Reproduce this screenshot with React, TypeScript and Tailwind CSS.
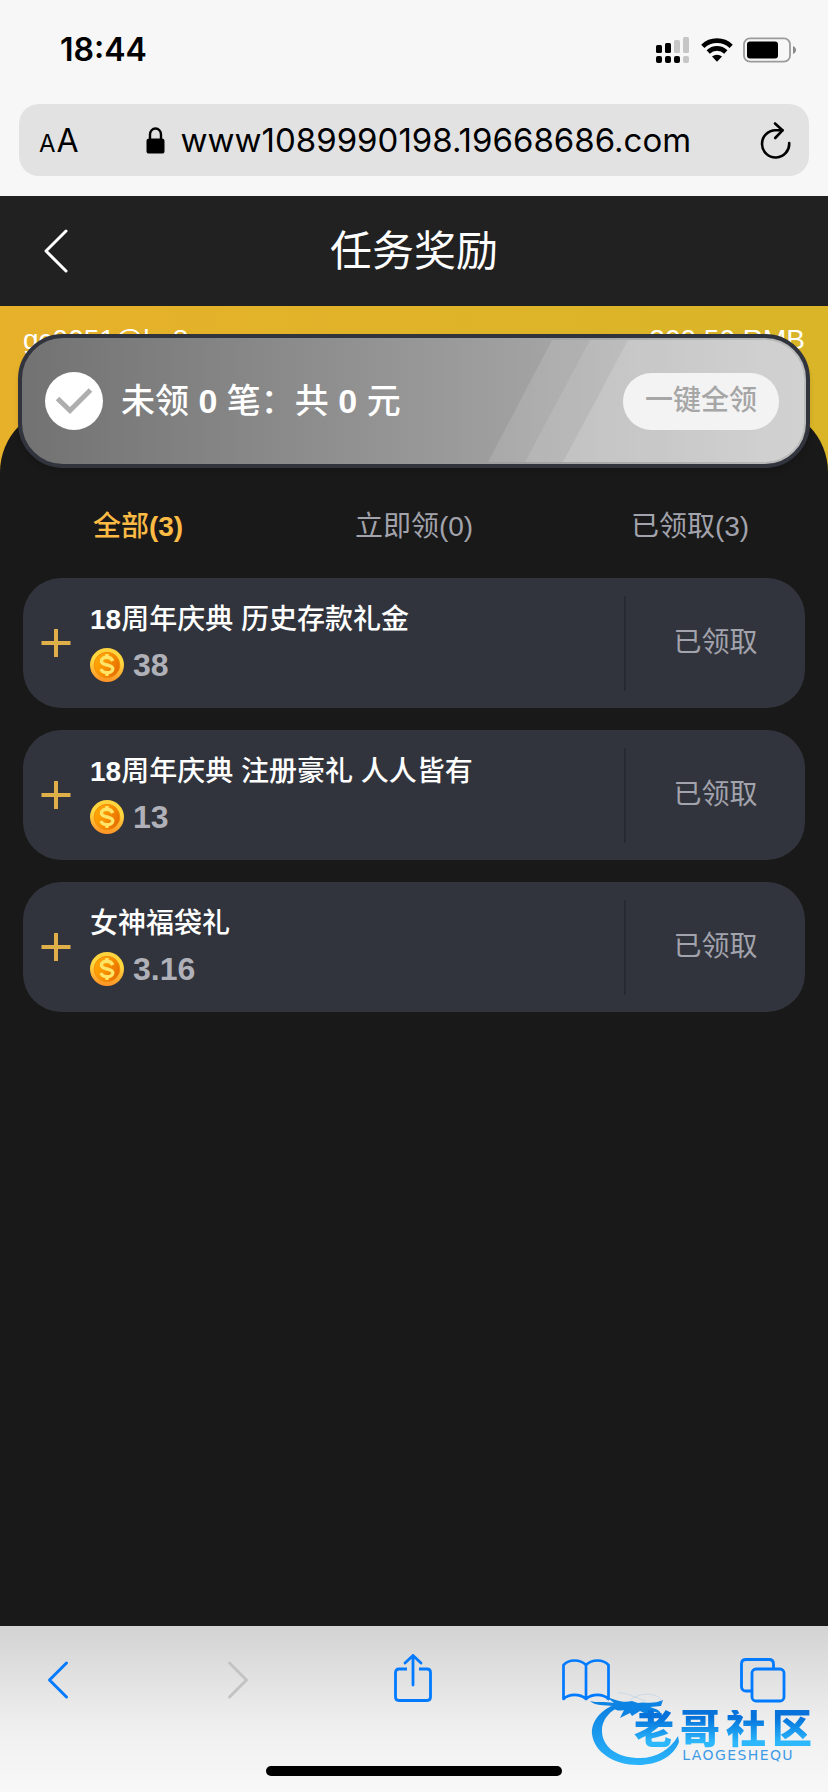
import React from "react";

const rewards = [
  { title: "18周年庆典 历史存款礼金", amount: "38" },
  { title: "18周年庆典 注册豪礼 人人皆有", amount: "13" },
  { title: "女神福袋礼", amount: "3.16" },
];

const tabs = [
  { name: "全部", count: 3, active: true },
  { name: "立即领", count: 0, active: false },
  { name: "已领取", count: 3, active: false },
];

function StatusBar() {
  return (
    <div className="flex h-[104px] items-center justify-between pr-[32px] pb-[4px] pl-[60px]">
      <span className="text-[32px] leading-10 font-semibold">18:44</span>
      <div className="flex items-center gap-[12px]">
        <svg className="h-[26px] w-[33px]" viewBox="0 0 33 26" aria-hidden="true">
          <g fill="#000">
            <rect x="0" y="8" width="6" height="8" rx="1.5" />
            <rect x="9" y="6" width="6" height="10" rx="1.5" />
            <rect x="0" y="19" width="6" height="7" rx="2" />
            <rect x="9" y="19" width="6" height="7" rx="2" />
            <rect x="18" y="19" width="6" height="7" rx="2" />
          </g>
          <g fill="#c6c6c6">
            <rect x="18" y="3" width="6" height="13" rx="1.5" />
            <rect x="27" y="0" width="6" height="16" rx="1.5" />
            <rect x="27" y="19" width="6" height="7" rx="2" />
          </g>
        </svg>
        <svg className="h-[26px] w-[32px]" viewBox="0 0 32 26" aria-hidden="true">
          <g fill="none" stroke="#000" strokeWidth="4.6">
            <path d="M1.8 9.3 A20.5 20.5 0 0 1 30.2 9.3" />
            <path d="M7.2 15 A12.6 12.6 0 0 1 24.8 15" />
          </g>
          <path d="M11 19.6 A7.4 7.4 0 0 1 21 19.6 L16 24.8 Z" fill="#000" />
        </svg>
        <svg className="-ml-[2px] h-[26px] w-[53px]" viewBox="0 0 53 26" aria-hidden="true">
          <rect x="1" y="1.3" width="46" height="23.4" rx="6" fill="none" stroke="#9b9b9b" strokeWidth="1.8" />
          <rect x="4" y="4.5" width="31" height="17" rx="3" fill="#000" />
          <path d="M50 9 C54 10.500 54 15.500 50 17 Z" fill="#8a8a8a" />
        </svg>
      </div>
    </div>
  );
}

function AddressBar() {
  return (
    <div className="mx-[19px] flex h-[72px] items-center justify-between rounded-[20px] bg-[#e2e2e2] pr-[18px] pl-[20px]">
      <button type="button" aria-label="文字大小" className="flex items-baseline gap-[1px] pt-[4px]">
        <span className="text-[24px] leading-10">A</span>
        <span className="text-[32px] leading-10">A</span>
      </button>
      <div className="flex items-center gap-[16px]">
        <svg className="h-[27px] w-[19px]" viewBox="0 0 19 27" aria-hidden="true">
          <path d="M4 13 V7.500 A5.500 6 0 0 1 15 7.500 V13" fill="none" stroke="#000" strokeWidth="2.400" />
          <rect x="0.500" y="11.500" width="18" height="15" rx="2.600" fill="#000" />
        </svg>
        <span className="text-[33px] leading-10">www1089990198.19668686.com</span>
      </div>
      <button type="button" aria-label="重新加载">
        <svg className="h-[38px] w-[33px]" viewBox="0 0 33 38" fill="none" stroke="#000" strokeWidth="2.600" strokeLinecap="round" strokeLinejoin="round">
          <path d="M24.500 9.300 H17.500 A13.600 13.600 0 1 0 31.200 22" />
          <path d="M17 2.500 L24.500 9.300 L17.200 17" />
        </svg>
      </button>
    </div>
  );
}

function Coin() {
  return (
    <svg className="h-[34px] w-[34px]" viewBox="0 0 34 34" aria-hidden="true">
      <defs>
        <linearGradient id="coinRim" x1="0.700" y1="0" x2="0.600" y2="1">
          <stop offset="0" stopColor="#ffd23e" />
          <stop offset="0.400" stopColor="#ffd83f" />
          <stop offset="1" stopColor="#ff9326" />
        </linearGradient>
        <linearGradient id="coinFace" x1="0" y1="0.200" x2="1" y2="0.700">
          <stop offset="0" stopColor="#ffa908" />
          <stop offset="0.450" stopColor="#f99400" />
          <stop offset="1" stopColor="#e66a00" />
        </linearGradient>
      </defs>
      <circle cx="17" cy="17" r="17" fill="url(#coinRim)" />
      <circle cx="17" cy="17" r="12.800" fill="url(#coinFace)" stroke="#ef8a0a" strokeWidth="0.800" />
      <path
        d="M22.800 13 C21.600 10.200 19.200 9.300 16.800 9.300 C13.600 9.300 11.400 10.900 11.400 13.200 C11.400 18.300 22.800 15.700 22.800 20.800 C22.800 23.200 20.400 24.800 17.200 24.800 C14.400 24.800 12 23.700 11 21 M17 6 V9.500 M17 24.500 V28"
        fill="none"
        stroke="#ffe467"
        strokeWidth="3.400"
      />
    </svg>
  );
}

function SummaryCard() {
  return (
    <section className="relative mx-[18px] -mt-[73px] flex h-[134px] items-center justify-between overflow-hidden rounded-[45px] border-4 border-[#31343d] bg-linear-to-r from-[#727272] via-[#9e9e9e] via-60% to-[#bcbcbc] pr-[27px] pl-[23px] shadow-md">
      <svg className="absolute top-[2px] right-[2px] h-[122px] w-[316px]" viewBox="0 0 316 122" aria-hidden="true">
        <defs>
          <clipPath id="sheen">
            <rect x="-60" y="0" width="376" height="122" rx="39" />
          </clipPath>
        </defs>
        <g clipPath="url(#sheen)" fill="#fff">
          <path d="M64 0 H316 V122 H0 Z" fillOpacity="0.120" />
          <path d="M102 0 H316 V122 H37 Z" fillOpacity="0.110" />
          <path d="M140 0 H316 V122 H75 Z" fillOpacity="0.160" />
        </g>
      </svg>
      <div className="relative flex items-center gap-[18px]">
        <svg className="h-[58px] w-[58px]" viewBox="0 0 58 58" aria-hidden="true">
          <circle cx="29" cy="29" r="29" fill="#fff" />
          <path d="M12.500 26.500 L25 38.500 L45.500 18" fill="none" stroke="#aeaeae" strokeWidth="5" />
        </svg>
        <p className="text-[34px] leading-[50px] font-medium text-white">
          未领 <b className="font-bold">0</b> 笔：共 <b className="font-bold">0</b> 元
        </p>
      </div>
      <button type="button" className="relative h-[57px] w-[156px] rounded-full bg-[#f3f3f3] text-[28px] leading-10 font-medium text-[#a6a6a6]">
        一键全领
      </button>
    </section>
  );
}

function RewardItem({ title, amount }: { title: string; amount: string }) {
  return (
    <li className="flex h-[130px] items-center rounded-[38px] bg-[#31343c]">
      <button type="button" aria-label="展开" className="flex w-[67px] shrink-0 pl-[18px]">
        <svg className="h-[30px] w-[30px]" viewBox="0 0 30 30" stroke="#dfb04a" strokeWidth="4">
          <path d="M0.500 15 H29.500 M15 1 V29" />
        </svg>
      </button>
      <div className="flex flex-1 flex-col gap-[8px] pb-[5px]">
        <h2 className="text-[28px] leading-10 font-medium text-white">
          {title.split(/(\d+)/).map((part, i) => (i % 2 ? <b key={i} className="font-bold">{part}</b> : part))}
        </h2>
        <p className="flex items-center gap-[9px] text-[32px] leading-[34px] font-bold text-[#b0b1b8]">
          <Coin />
          {amount}
        </p>
      </div>
      <div className="flex h-[95px] w-[181px] items-center justify-center border-l-2 border-[#272a31] text-[28px] text-[#a2a3ac]">
        已领取
      </div>
    </li>
  );
}

function Watermark() {
  return (
    <div className="absolute right-[16px] bottom-[26px] flex h-[76px] w-[222px] flex-col items-end justify-end pb-[4px]" aria-hidden="true">
      <svg className="absolute top-0 left-0 h-[76px] w-[92px]" viewBox="0 0 92 76">
        <defs>
          <linearGradient id="dragon" x1="0" y1="0" x2="0" y2="1">
            <stop offset="0" stopColor="#0b7fe0" />
            <stop offset="1" stopColor="#2bb4fb" />
          </linearGradient>
        </defs>
        <path
          d="M26 14 C10 20 1 32 2 44 C4 62 24 75 48 75 C68 75 84 66 89 52 L88 46 C80 60 66 68 50 68 C28 68 13 58 12 42 C11 30 20 20 33 15 Z"
          fill="url(#dragon)"
        />
        <path
          d="M0 11 C6 13 14 11 24 13 L17 7 C28 11 34 13 42 11 L48 13 C54 11 62 15 73 10 L71 16 L60 17 C66 19 70 20 71 24 L62 21 L56 24 L50 21 L42 26 L40 23 L30 28 L34 20 C26 22 22 18 24 16 C14 15 5 16 0 11 Z"
          fill="#0d84e4"
        />
        <path d="M40 10 C54 0 70 4 72 12 M28 3 C36 2 46 8 56 11" fill="none" stroke="#9fc4e4" strokeWidth="1" opacity="0.400" />
      </svg>
      <span className="relative flex gap-[6px] text-[40px] leading-[38px] font-black text-transparent">
        {[..."老哥社区"].map((char) => (
          <span key={char} className="bg-linear-to-b from-[#0672da] from-20% to-[#2db8fd] to-85% bg-clip-text">
            {char}
          </span>
        ))}
      </span>
      <span className="relative mr-[18px] font-['DejaVu_Sans',sans-serif] text-[14px] leading-[14px] tracking-widest text-[#3d9be6]">LAOGESHEQU</span>
    </div>
  );
}

function Toolbar() {
  return (
    <footer className="relative h-[166px] bg-linear-to-b from-[#d3d3d3] via-[#efefef] via-60% to-[#f8f8f8]">
      <nav className="flex items-center justify-between pt-[26px] pr-[42px] pl-[46px] text-[#007aff]">
        <button type="button" aria-label="后退">
          <svg className="h-[54px] w-[26px]" viewBox="0 0 26 54" fill="none" stroke="currentColor" strokeWidth="3" strokeLinecap="round" strokeLinejoin="round">
            <path d="M20.500 11 L3.500 28 L20.500 45" />
          </svg>
        </button>
        <button type="button" aria-label="前进" disabled className="ml-[22px] text-[#c3c3c3]">
          <svg className="h-[54px] w-[26px]" viewBox="0 0 26 54" fill="none" stroke="currentColor" strokeWidth="3" strokeLinecap="round" strokeLinejoin="round">
            <path d="M5.500 11 L22.500 28 L5.500 45" />
          </svg>
        </button>
        <button type="button" aria-label="分享" className="ml-[13px]">
          <svg className="h-[54px] w-[40px]" viewBox="0 0 40 54" fill="none" stroke="currentColor" strokeWidth="2.800" strokeLinecap="round" strokeLinejoin="round">
            <path d="M14 17 H6 Q2.500 17 2.500 20.500 V45 Q2.500 48.500 6 48.500 H34 Q37.500 48.500 37.500 45 V20.500 Q37.500 17 34 17 H26" strokeLinecap="butt" />
            <path d="M20 33 V3.500 M12 11 L20 3.500 L28 11" />
          </svg>
        </button>
        <button type="button" aria-label="书签">
          <svg className="h-[54px] w-[48px]" viewBox="0 0 48 54" fill="none" stroke="currentColor" strokeWidth="2.700" strokeLinejoin="round">
            <path d="M24 13 C18 7 7 7 1.500 13 V47 C7 41.500 18 41.500 24 47 C30 41.500 41 41.500 46.500 47 V13 C41 7 30 7 24 13 Z V47" />
          </svg>
        </button>
        <button type="button" aria-label="标签页">
          <svg className="h-[54px] w-[46px]" viewBox="0 0 46 54" fill="none" stroke="currentColor" strokeWidth="2.800">
            <path d="M11 39 H6 Q1.500 39 1.500 34.500 V12 Q1.500 7.500 6 7.500 H29 Q33.500 7.500 33.500 12 V17" />
            <rect x="12" y="17" width="32" height="32" rx="4" />
          </svg>
        </button>
      </nav>
      <div className="absolute bottom-4 left-1/2 h-[10px] w-[296px] -translate-x-1/2 rounded-full bg-black" />
      <Watermark />
    </footer>
  );
}

export default function App() {
  return (
    <div className="flex min-h-screen flex-col bg-[#191919] font-['Liberation_Sans','Noto_Sans_CJK_SC',sans-serif]">
      <header className="h-[196px] bg-[#f7f7f7] font-['Inter',sans-serif] text-black">
        <StatusBar />
        <AddressBar />
      </header>

      <div className="flex h-[110px] items-center justify-between bg-[#212121] px-[42px] text-white">
        <button type="button" aria-label="返回" className="w-[30px]">
          <svg className="h-[46px] w-[30px]" viewBox="0 0 30 46" fill="none" stroke="currentColor" strokeWidth="3" strokeLinecap="round" strokeLinejoin="round">
            <path d="M24 3 L4 23 L24 43" />
          </svg>
        </button>
        <h1 className="pt-[2px] text-[42px] leading-[60px] font-normal">任务奖励</h1>
        <span className="w-[30px]" />
      </div>

      <main className="flex flex-1 flex-col bg-linear-to-r from-[#e7b12a] to-[#d9b527]">
        <div className="flex h-[101px] items-start justify-between px-[23px] pt-[18px] text-[28px] leading-8 text-white">
          <span>gc0051@hy8</span>
          <span>200.50 RMB</span>
        </div>
        <div className="flex-1 rounded-t-[65px] bg-[#191919]">
          <SummaryCard />
          <div role="tablist" className="mt-2 grid h-[102px] grid-cols-3 text-[28px]">
            {tabs.map((tab) => (
              <button
                key={tab.name}
                type="button"
                role="tab"
                aria-selected={tab.active}
                className={tab.active ? "font-medium text-[#fbbb44]" : "text-[#a2a3ac]"}
              >
                {tab.name}
                <span className={tab.active ? "font-bold" : "font-normal"}>({tab.count})</span>
              </button>
            ))}
          </div>
          <ul className="mx-[23px] flex flex-col gap-[22px]">
            {rewards.map((item) => (
              <RewardItem key={item.title} title={item.title} amount={item.amount} />
            ))}
          </ul>
        </div>
      </main>

      <Toolbar />
    </div>
  );
}
